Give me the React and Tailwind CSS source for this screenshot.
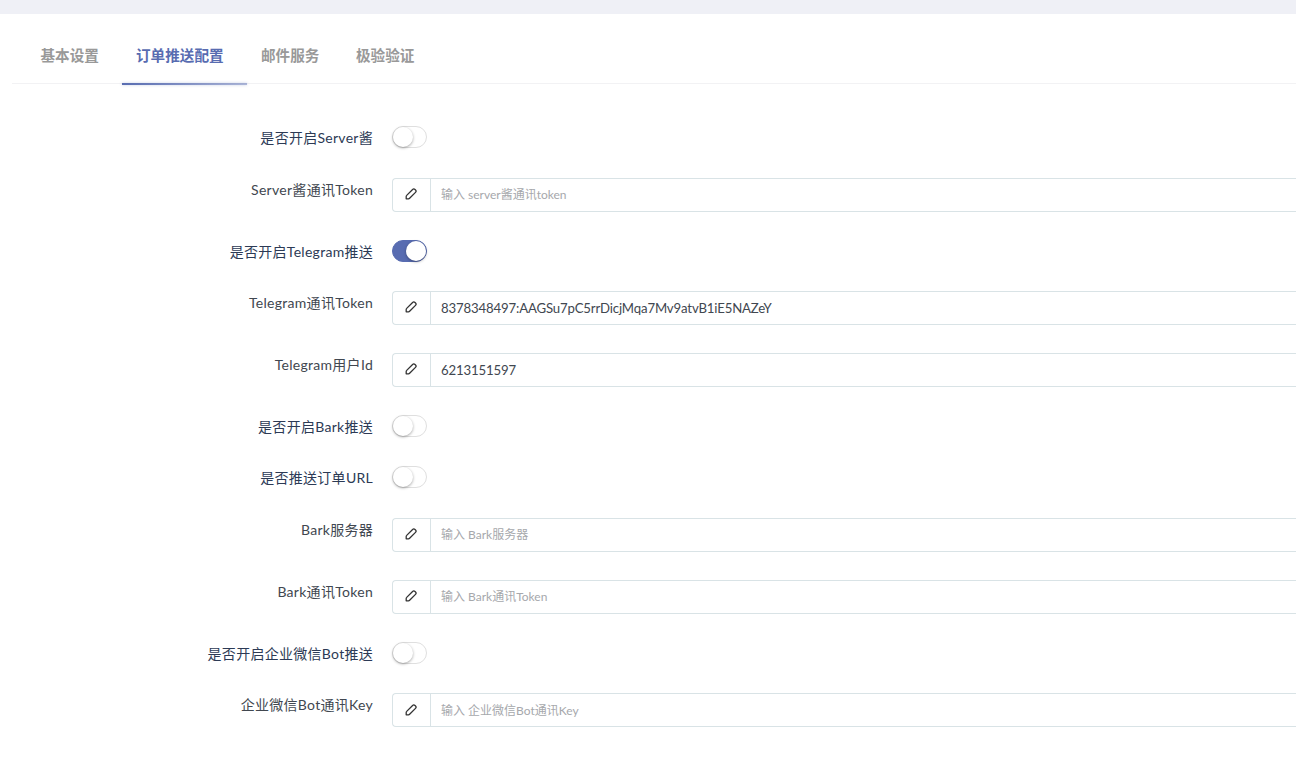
import React, { useState } from 'react';

const tabs = [
  { label: '基本设置', className: 'w-[96px] pl-[14.5px]' },
  { label: '订单推送配置', className: 'w-[125px] pl-[14px]' },
  { label: '邮件服务', className: 'w-[95px] pl-[14px]' },
  { label: '极验验证', className: 'w-[95px] pl-[14px]' },
];

const fields = [
  { type: 'switch', label: '是否开启Server酱', on: false },
  { type: 'text', label: 'Server酱通讯Token', placeholder: '输入 server酱通讯token' },
  { type: 'switch', label: '是否开启Telegram推送', on: true },
  { type: 'text', label: 'Telegram通讯Token', value: '8378348497:AAGSu7pC5rrDicjMqa7Mv9atvB1iE5NAZeY' },
  { type: 'text', label: 'Telegram用户Id', value: '6213151597' },
  { type: 'switch', label: '是否开启Bark推送', on: false },
  { type: 'switch', label: '是否推送订单URL', on: false },
  { type: 'text', label: 'Bark服务器', placeholder: '输入 Bark服务器' },
  { type: 'text', label: 'Bark通讯Token', placeholder: '输入 Bark通讯Token' },
  { type: 'switch', label: '是否开启企业微信Bot推送', on: false },
  { type: 'text', label: '企业微信Bot通讯Key', placeholder: '输入 企业微信Bot通讯Key' },
];

function PencilIcon() {
  return (
    <svg className="h-[12px] w-[12px]" viewBox="0 0 12 12" fill="none" stroke="currentColor" strokeWidth="1.3" strokeLinecap="round" strokeLinejoin="round">
      <path d="M7.6 1.5a1.7 1.7 0 0 1 2.4 0l.5.5a1.7 1.7 0 0 1 0 2.4L4.6 10.3a1.6 1.6 0 0 1-1.1.5H1.2V8.5a1.6 1.6 0 0 1 .5-1.1z" />
    </svg>
  );
}

function Switch({ initial }) {
  const [on, setOn] = useState(initial);

  return (
    <button
      type="button"
      onClick={() => setOn(!on)}
      className={`flex h-[22px] w-[35px] rounded-full border ${
        on ? 'justify-end border-[#586cb1] bg-[#586cb1]' : 'justify-start border-[#dfdfdf] bg-white'
      }`}
    >
      <span className="h-[20px] w-[20px] rounded-full bg-white shadow-[0_1px_3px_rgba(0,0,0,0.35)]" />
    </button>
  );
}

function TextField({ value, placeholder }) {
  return (
    <div className="flex h-[34px] flex-1 rounded-l-[4px] border border-r-0 border-[#d9e3e6]">
      <span className="flex w-[38px] shrink-0 items-center justify-center border-r border-[#d9e3e6] pb-px pr-px text-[#333]">
        <PencilIcon />
      </span>
      <input
        defaultValue={value}
        placeholder={placeholder}
        className="min-w-0 flex-1 px-[10px] pt-px text-[13.2px] tracking-[-0.15px] text-[#414750] outline-none placeholder:text-[12px] placeholder:tracking-normal placeholder:text-[#a6a8ac]"
      />
    </div>
  );
}

function App() {
  const [active, setActive] = useState(1);

  return (
    <div className="h-[759px] overflow-hidden bg-white font-[Lato,'Noto_Sans_CJK_SC',sans-serif]">
      <div className="h-[14px] bg-[#eff0f6]" />

      {/* Tabs */}
      <div className="ml-[12px] flex h-[70px] border-b border-[#f2f2f4] pl-[14px]">
        {tabs.map((tab, i) => (
          <button
            key={tab.label}
            type="button"
            onClick={() => setActive(i)}
            className={`relative h-[71px] pb-[9px] pt-[21px] text-left text-[14.6px] font-bold leading-[41px] whitespace-nowrap ${tab.className} ${
              active === i ? 'text-[#586cb1]' : 'text-[#999]'
            }`}
          >
            {tab.label}
            {active === i && (
              <span className="absolute bottom-0 left-0 h-[2px] w-full bg-linear-to-r from-[#586cb1] to-[#586cb1]/50 shadow-[0_0_3px_rgba(88,108,177,0.35)]" />
            )}
          </button>
        ))}
      </div>

      {/* Form */}
      <form className="pt-[42.2px]">
        {fields.map((field) => (
          <div key={field.label} className={`flex items-start ${field.type === 'switch' ? 'h-[51.4px]' : 'h-[62px]'}`}>
            <label
              className={`mr-[19px] w-[373px] shrink-0 text-right text-[14px] leading-[24px] tracking-[0.28px] ${
                field.type === 'switch' ? 'text-[#2c3a55]' : 'text-[#414750]'
              }`}
            >
              {field.label}
            </label>
            {field.type === 'switch' ? (
              <Switch initial={field.on} />
            ) : (
              <TextField value={field.value} placeholder={field.placeholder} />
            )}
          </div>
        ))}
      </form>
    </div>
  );
}

export default App;
